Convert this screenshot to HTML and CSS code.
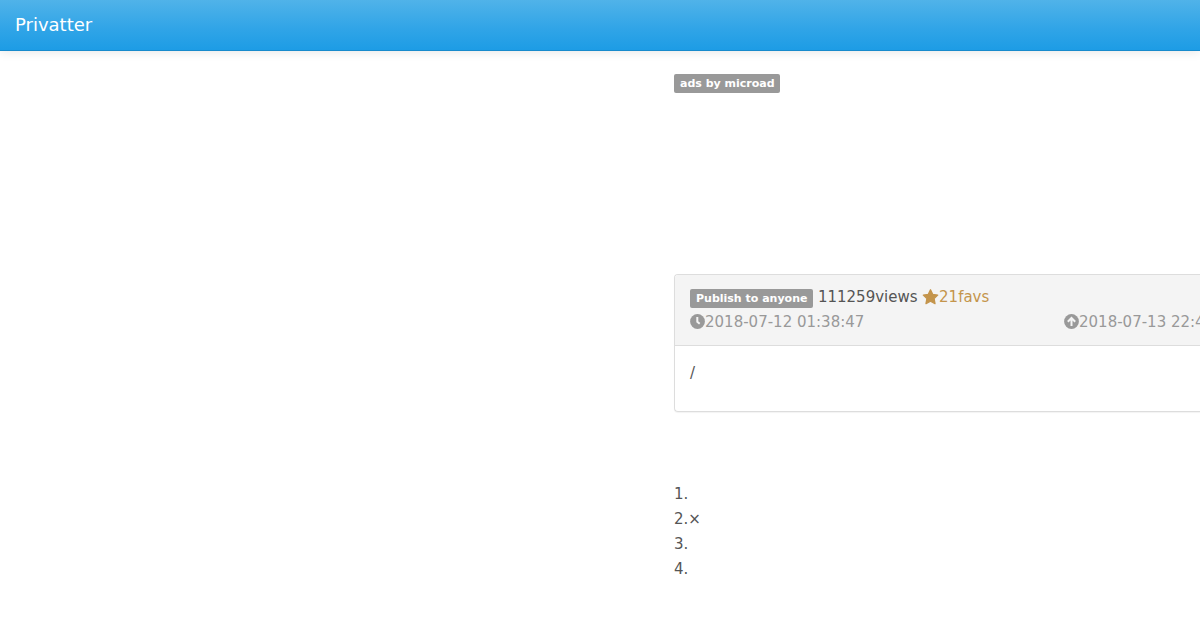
FILE: index.html
```html
<!DOCTYPE html>
<html lang="en">
<head>
    <meta charset="utf-8">
    <title>Privatter</title>
    <link rel="stylesheet" href="styles.css">
</head>
<body>
    <header class="navbar">
        <a class="brand">Privatter</a>
    </header>

    <main class="content">
        <div class="ads">
            <span class="label">ads by microad</span>
        </div>

        <div class="panel">
            <div class="panel-heading">
                <div class="stats">
                    <span class="label">Publish to anyone</span>
                    <span>111259views</span>
                    <span class="favs"><svg class="icon star" viewBox="0 0 17 16"><path d="M8.500 .8l2.200 4.600 5 .7-3.600 3.500.9 5-4.500-2.400L4 14.600l.9-5L1.300 6.100l5-.7z"/></svg>21favs</span>
                </div>
                <div class="dates">
                    <div class="date"><svg class="icon" viewBox="0 0 15 15"><circle cx="7.5" cy="7.5" r="7.4"/><path class="line" d="M7.3 3v4.8l2.400 2"/></svg>2018-07-12 01:38:47</div>
                    <div class="date"><svg class="icon" viewBox="0 0 15 15"><circle cx="7.5" cy="7.5" r="7.4"/><path class="line" d="M7.5 12V4M3.800 7.700l3.700-3.700 3.700 3.700"/></svg>2018-07-13 22:4</div>
                </div>
            </div>
            <div class="panel-body">/</div>
        </div>

        <div class="notes">
            <div>1.</div>
            <div>2.×</div>
            <div>3.</div>
            <div>4.</div>
        </div>
    </main>
</body>
</html>
```
FILE: styles.css
```css
* {
    box-sizing: border-box;
}
body {
    margin: 0;
    height: 630px;
    overflow: hidden;
    font-family: "DejaVu Sans", sans-serif;
    font-size: 15px;
    line-height: 25px;
    color: #555;
    background-color: #fff;
}
.navbar {
    height: 51px;
    padding: 12px 15px;
    background-image: linear-gradient(#50b3e9, #2fa4e7 60%, #1d9ce5);
    border-bottom: 1px solid #178acc;
    box-shadow: 0 1px 10px rgba(0, 0, 0, 0.1);
}
.brand {
    display: block;
    color: #fff;
    font-size: 18px;
    line-height: 25px;
}
.content {
    margin-left: 674px;
    padding-top: 23px;
}
.ads {
    display: flex;
    align-items: flex-start;
    height: 200px;
}
.label {
    padding: 3px 6px;
    border-radius: 2px;
    background-color: #999;
    color: #fff;
    font-size: 11px;
    font-weight: bold;
    line-height: 13px;
    white-space: nowrap;
}
.ads .label {
    padding-right: 5px;
}
.panel {
    height: 138px;
    border: 1px solid #ddd;
    border-right: none;
    border-radius: 4px 0 0 4px;
    box-shadow: 0 1px 1px rgba(0, 0, 0, 0.05);
}
.panel-heading {
    height: 71px;
    padding: 10px 0 10px 15px;
    background-color: #f4f4f4;
    border-bottom: 1px solid #ddd;
    border-radius: 3px 0 0 0;
}
.stats {
    display: flex;
    gap: 4.5px;
}
.stats .label {
    align-self: flex-start;
    margin-top: 4px;
}
.favs {
    display: flex;
    color: #c4954c;
}
.icon {
    width: 15px;
    height: 15px;
    margin-top: 4px;
    fill: currentColor;
}
.star {
    width: 17px;
    height: 16px;
    stroke: currentColor;
    stroke-width: 1.3;
    stroke-linejoin: round;
}
.line {
    fill: none;
    stroke: #f4f4f4;
    stroke-width: 2;
}
.dates {
    display: flex;
    overflow: hidden;
    color: #999;
}
.date {
    display: flex;
    flex-shrink: 0;
    white-space: nowrap;
}
.date:first-child {
    width: 374px;
}
.panel-body {
    padding: 15px;
}
.notes {
    padding-top: 70px;
}
```
